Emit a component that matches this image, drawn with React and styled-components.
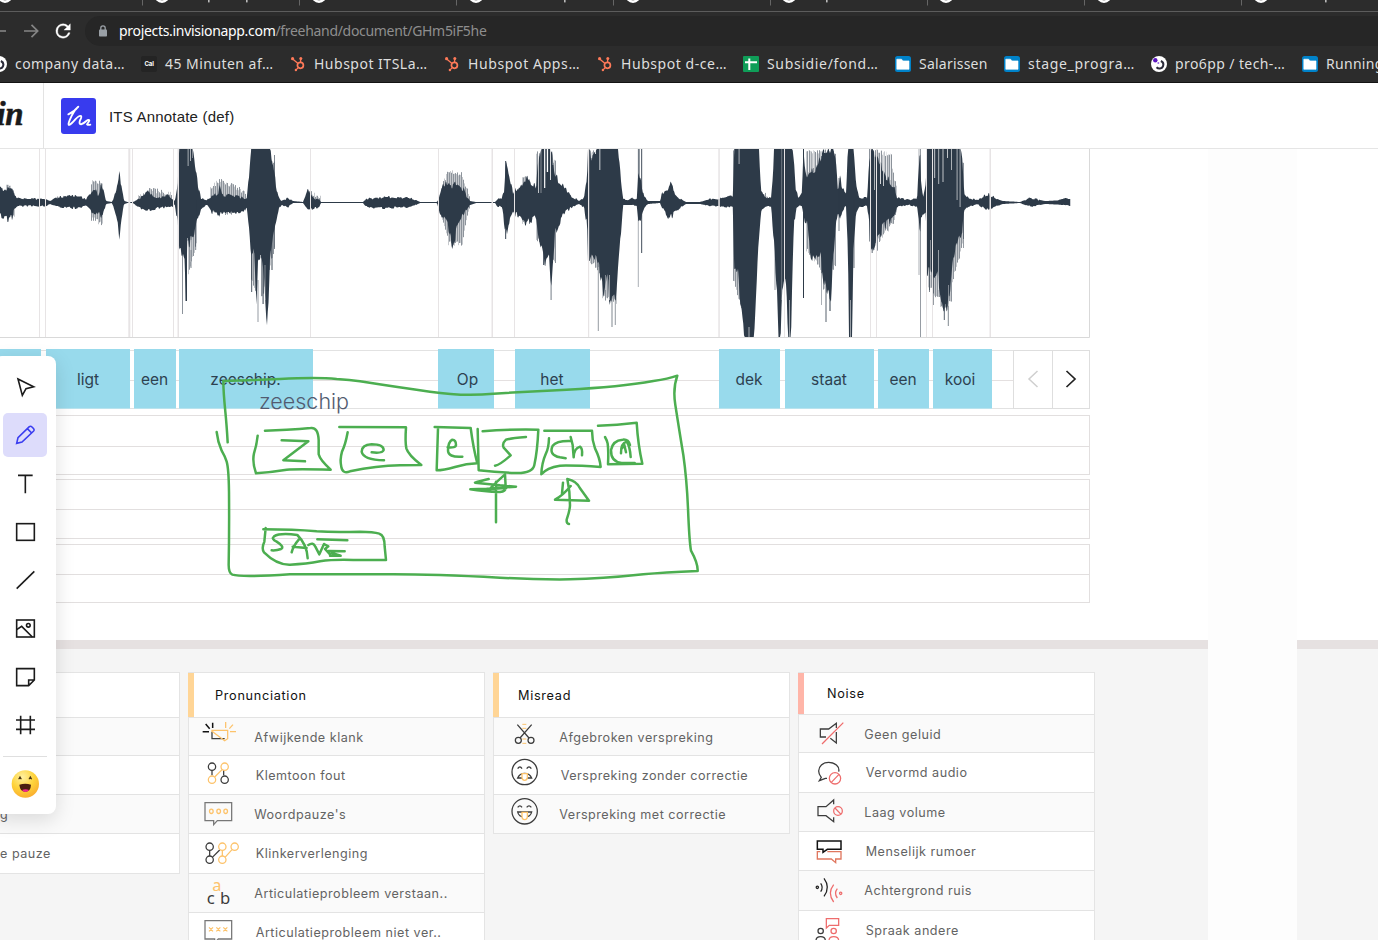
import React from "react";
import styled, { createGlobalStyle } from "styled-components";

const Global = createGlobalStyle`
  * { box-sizing: border-box; }
  body { margin: 0; overflow: hidden; background: #fff; font-family: Inter, sans-serif; }
  svg { display: block; flex: none; overflow: visible; }
`;

const Page = styled.div`
  width: 1378px;
  height: 940px;
  overflow: hidden;
  display: flex;
  flex-direction: column;
  position: relative;
`;

/* ---------- browser chrome ---------- */

const Chrome = styled.div`
  flex: none;
  height: 83px;
  background: #2c2c2c;
  border-bottom: 1px solid #141414;
  font-family: "Noto Sans", sans-serif;
`;
const TabStrip = styled.div`
  height: 12px;
  border-bottom: 1px solid #5c5c5c;
  overflow: hidden;
`;
const AddressRow = styled.div`
  height: 34px;
  padding-top: 4px;
  display: flex;
`;
const NavButtons = styled.div`
  width: 85px;
  height: 30px;
`;
const Omnibox = styled.div`
  flex: 1;
  height: 30px;
  border-radius: 15px 0 0 15px;
  background: #262626;
  display: flex;
  align-items: center;
  padding: 0 0 1px 13px;
  gap: 11px;
  font-size: 14px;
  line-height: 18px;
  letter-spacing: -0.31px;
  color: #8e8e8e;
  b { font-weight: 400; color: #fff; }
`;
const Bookmarks = styled.div`
  height: 36px;
  display: flex;
  margin-left: -9px;
`;
const Bookmark = styled.div`
  flex: none;
  width: ${(p) => p.$w}px;
  height: 36px;
  display: flex;
  align-items: center;
  gap: 8px;
  white-space: nowrap;
  font-size: 14px;
  letter-spacing: ${(p) => p.$track}px;
  color: #dedede;
  span { padding-bottom: 2px; }
`;

const TAB_X = [5, 162, 319, 476, 633, 789, 946, 1104, 1261];
const SEP_X = [142, 299, 456, 613, 770, 927, 1084, 1241];
const TAILS = [208, 246, 564, 826, 1325];

const TabMarks = () => (
  <svg width="1378" height="11" viewBox="0 0 1378 11">
    {TAB_X.map((x) => (
      <circle key={x} cx={x} cy="-5" r="6.6" fill="none" stroke="#fff" strokeWidth="2.6" />
    ))}
    {SEP_X.map((x) => (
      <rect key={x} x={x} y="0" width="1" height="5.5" fill="#666" />
    ))}
    {TAILS.map((x) => (
      <rect key={x} x={x} y="0" width="1.6" height="2.4" fill="#bbb" />
    ))}
  </svg>
);

const NavIcons = () => (
  <svg width="85" height="30" viewBox="0 16 85 30" fill="none">
    <path d="M-4 31H6" stroke="#7b7b7b" strokeWidth="1.8" />
    <path d="M24 31h13M31.5 24.8l6.2 6.2-6.2 6.2" stroke="#858585" strokeWidth="1.7" />
    <path
      transform="translate(52.3 20.2) scale(.9)"
      d="M17.65 6.35A7.95 7.95 0 0 0 12 4a8 8 0 1 0 7.73 10h-2.08A6 6 0 1 1 12 6c1.66 0 3.14.69 4.22 1.78L13 11h7V4l-2.35 2.35z"
      fill="#fff" stroke="#fff" strokeWidth=".4"
    />
  </svg>
);

const Lock = () => (
  <svg width="10" height="12" viewBox="0 0 10 12">
    <rect x="1" y="4.5" width="8" height="7" rx=".8" fill="#9aa0a6" />
    <path d="M2.8 5V3a2.2 2.2 0 0 1 4.4 0v2" fill="none" stroke="#9aa0a6" strokeWidth="1.3" />
  </svg>
);

const Swirl = () => (
  <svg width="16" height="16" viewBox="0 0 16 16">
    <circle cx="8" cy="8" r="8" fill="#fff" />
    <path d="M5.500 11.300c2 2 5.400 1.500 6.400-.8 1-2.300 0-4.500-2-5.500" fill="none" stroke="#2c2c3a" strokeWidth="2" />
    <circle cx="4.300" cy="4.300" r="2.200" fill="#5a14c0" />
    <circle cx="7.300" cy="7" r="1" fill="#9a6be0" />
  </svg>
);
const CalLogo = () => (
  <svg width="16" height="16" viewBox="0 0 16 16">
    <rect width="16" height="16" rx="2" fill="#242424" />
    <text x="8" y="10.300" textAnchor="middle" fontSize="6.200" letterSpacing="-.2" fontWeight="700" fontFamily="Inter" fill="#fff">Cal</text>
  </svg>
);
const Hub = () => (
  <svg width="16" height="16" viewBox="0 0 16 16" fill="none" stroke="#ff7a59">
    <circle cx="10.400" cy="9.300" r="3" strokeWidth="1.700" />
    <path d="M10.600 6V3M8 7.400L3 3.200M8.300 11.600L6.300 13.600" strokeWidth="1.300" />
    <g fill="#ff7a59" stroke="none">
      <circle cx="10.800" cy="2.600" r="1.500" />
      <circle cx="2.600" cy="2.700" r="1.600" />
      <circle cx="5.900" cy="14" r="1.200" />
    </g>
  </svg>
);
const Sheet = () => (
  <svg width="16" height="16" viewBox="0 0 16 16">
    <rect width="16" height="16" rx="1" fill="#0f9d58" />
    <path d="M2 6.300h12M6.300 2.500v11.500" stroke="#fff" strokeWidth="2" />
  </svg>
);
const Folder = () => (
  <svg width="16" height="16" viewBox="0 0 16 16">
    <rect width="16" height="16" rx="2.500" fill="#0082c9" />
    <path d="M1.800 3.200h4.700l1.600 1.700h5.900v8.400h-12.200z" fill="#fff" stroke="#fff" strokeWidth=".6" strokeLinejoin="round" />
  </svg>
);

const BOOKMARKS = [
  [Swirl, "company data…", 150, 0.42],
  [CalLogo, "45 Minuten af…", 149, 0.46],
  [Hub, "Hubspot ITSLa…", 154, 0.5],
  [Hub, "Hubspot Apps…", 153, 0.62],
  [Hub, "Hubspot d-ce…", 146, 0.55],
  [Sheet, "Subsidie/fond…", 152, 0.66],
  [Folder, "Salarissen", 109, 0.22],
  [Folder, "stage_progra…", 147, 0.7],
  [Swirl, "pro6pp / tech-…", 151, 0.4],
  [Folder, "Running", 100, 0.3],
];

/* ---------- document header ---------- */

const Header = styled.div`
  flex: none;
  height: 66px;
  border-bottom: 1px solid #e5e5e5;
  display: flex;
  align-items: center;
`;
const Brand = styled.div`
  width: 44px;
  height: 66px;
  border-right: 1px solid #e3e3e3;
  display: flex;
  justify-content: flex-end;
  padding: 12px 20px 0 0;
  font: italic 700 33px/38px "Liberation Serif", serif;
  -webkit-text-stroke: 0.5px #1a1a1a;
  color: #1a1a1a;
  letter-spacing: -0.5px;
`;
const DocIcon = styled.div`
  width: 35px;
  height: 36px;
  margin-left: 17px;
  border-radius: 3px;
  background: #383bee;
`;
const DocTitle = styled.div`
  margin-left: 13px;
  padding-top: 1px;
  font: 15px "Liberation Sans", sans-serif;
  letter-spacing: 0.2px;
  color: #222;
`;

/* ---------- canvas ---------- */

const Canvas = styled.div`
  flex: 1;
  display: flex;
  position: relative;
  background: #fdfdfd;
`;
const Artboard = styled.div`
  flex: none;
  width: ${(p) => p.$w}px;
  margin-right: ${(p) => p.$gap || 0}px;
  display: flex;
  flex-direction: column;
  background: #fff;
`;
const Upper = styled.div`
  height: 491px;
`;
const Divider = styled.div`
  height: 9px;
  background: #e6e1e1;
`;
const Lower = styled.div`
  flex: 1;
  background: #f5f5f5;
  padding-top: 23px;
  display: flex;
  align-items: flex-start;
  gap: 8px;
  height: 291px;
  overflow: hidden;
`;

const SegmentRow = styled.div`
  width: 1090px;
  height: 60px;
  margin-top: 11px;
  display: flex;
  background:
    linear-gradient(#e2e2e2, #e2e2e2) 0 1px / 100% 1px no-repeat,
    linear-gradient(#e4e0e0, #e4e0e0) 0 31px / 100% 1px no-repeat,
    linear-gradient(#e2e2e2, #e2e2e2) 0 59px / 100% 1px no-repeat;
`;
const Segment = styled.div`
  flex: none;
  width: ${(p) => p.$w}px;
  margin-left: ${(p) => p.$gap}px;
  height: 60px;
  line-height: 61px;
  text-align: center;
  text-indent: ${(p) => (p.$shift || 0) * 2}px;
  background: #98daec;
  border-bottom: 1px solid #b9e3ee;
  font-size: 15.5px;
  color: #2d4150;
`;
const Pager = styled.div`
  height: 59px;
  margin: 1px 0 0 21px;
  width: 77px;
  display: flex;
  background: #fff;
  border: 1px solid #dedede;
`;
const PagerCell = styled.div`
  width: ${(p) => p.$w}px;
  padding-bottom: 2px;
  display: flex;
  align-items: center;
  justify-content: center;
  & + & { border-left: 1px solid #dedede; }
`;
const Track = styled.div`
  width: 1090px;
  height: ${(p) => p.$h}px;
  margin-top: ${(p) => p.$gap}px;
  border: 1px solid #e2dfdf;
  border-left: 0;
`;
const TrackHalf = styled.div`
  height: ${(p) => p.$h}px;
  border-bottom: 1px solid #e2dfdf;
`;

/* [word, width, gap before, text shift] */
const SEGMENTS = [
  ["", 41, 0], ["ligt", 84, 5], ["een", 42, 4, -0.5], ["zeeschip.", 134, 3, -0.5], ["Op", 56, 125, 1.5],
  ["het", 75, 21, -0.5], ["dek", 61, 129, -0.5], ["staat", 89, 5, -0.5], ["een", 51, 4, -0.5], ["kooi", 59, 4, -2.5],
];

/* Envelope of the recording: [x, top, bottom]. */
const ENV = `0 190 216,5 188 218,8 187 219,12 190 217,15 197 208,18 198 206,40 199 206,45 199 206,50 201 204,57 198 207,70 195 208,80 197 208,86 199 205,92 190 212,95 189 217,98 195 211,101 184 216,103 190 215,106 201 204,112 202 203,114 197 209,118 182 222,119.5 166 239,121 184 222,124 201 204,128 202 203,133 202 203,137 200 206,145 195 210,149 190 211,152 196 210,158 198 208,168 195 207,172 199 207,175 201 205,178 180 225,179 149 249,183 149 252,184.500 149 258,186 149 300,187 149 245,193 149 238,195 165 230,198 185 218,201 198 208,207 200 205,212 197 212,218 193 213,220 185 213,222 194 212,232 196 212,240 197 212,245 199 210,247 197 208,249 178 225,251 149 250,254 149 252,256.500 149 302,258 149 262,261 149 257,263 149 262,267 149 327,268.5 149 300,270 149 258,272 160 240,275 178 225,278 195 212,281 201 205,288 198 207,293 201 203,303 202 203,307 191 208,310 193 209,315 199 208,319 199 207,321 202 203,363 202 203,366 199 207,385 197 208,400 198 207,410 198 207,416 200 205,420 202 203,437 202 203,439 197 210,443 186 218,448 185 226,453 185 247,457 184 230,463 188 216,467 197 208,470 201 205,476 202 203,495 202 203,497 200 206,502 197 207,504 192 222,506 162 236,508 170 225,510 178 220,513 192 212,515 187 214,520 190 216,526 179 225,530 183 220,536 187 217,538 165 235,541 149 245,545 149 262,549 149 252,551 149 290,553 160 258,555 175 235,560 182 220,566 190 212,573 197 206,579 201 204,584 198 207,587 180 225,588 149 262,592 158 252,597 149 262,600 149 272,604 149 296,607 149 275,610 149 302,616 149 298,618 149 270,621 180 230,623 199 205,628 200 205,632 198 205,637 199 206,638 170 225,641 180 218,644 197 208,648 201 204,660 201 203,662 194 208,667 189 215,670 183 219,675 192 212,679 198 208,686 202 204,700 202 204,710 199 206,720 199 206,722 197 207,733 197 207,734 149 272,738 149 270,740 149 300,743 149 320,744.500 149 337,754 149 337,757 149 275,759 149 235,761 188 210,764 196 208,768 198 206,771 198 207,773 175 230,774 149 245,777 149 290,778.500 149 337,780.5 149 337,782 149 290,785 149 270,787 149 305,788 149 337,791 149 337,792.500 149 275,794 160 225,796 192 210,799 197 206,802 192 206,803.5 149 215,805 168 225,807 178 225,811 172 255,815 172 262,820 160 252,823 150 278,827 151 290,831 149 300,833 149 262,836 160 225,838 195 213,840 178 222,843 190 210,846 193 206,848 149 250,849 149 337,852 149 337,853.500 149 250,856 185 212,859 198 207,867 198 206,869 165 220,871 149 250,873 152 248,877 158 238,882 168 230,887 178 222,892 186 218,895 188 212,897 198 207,903 199 206,910 200 205,917 198 207,919 168 218,920 149 232,921 180 215,923 198 216,926 185 212,927 149 272,930 149 270,933 149 282,937 149 270,940 149 290,943 149 308,947 149 310,950 149 290,953 149 260,957 149 240,959 149 230,962 155 235,964 192 212,968 198 207,977 200 204,982 197 207,987 194 209,992 196 209,997 199 206,1003 201 204,1020 202 203,1025 200 205,1029 198 206,1035 199 206,1040 200 205,1045 201 204,1057 200.5 204.5,1063 199 205,1070.500 199 205.5`
  .split(",").map((s) => s.split(" ").map(Number));

const wobble = (n) => { const v = Math.sin(n * 127.1) * 43758.5453; return v - Math.floor(v); };

function wavePath() {
  const up = [];
  const down = [];
  let k = 0;
  for (let x = 0; x <= 1070.5; x += 0.75) {
    while (k < ENV.length - 2 && ENV[k + 1][0] < x) k++;
    const [x0, a0, b0] = ENV[k];
    const [x1, a1, b1] = ENV[k + 1];
    const f = (x - x0) / (x1 - x0);
    const a = a0 + (a1 - a0) * f;
    const b = b0 + (b1 - b0) * f;
    const i = Math.floor(x / 1.5);
    const ja = 202.5 - a > 2.5 && a > 149 ? (wobble(i) - 0.5) * Math.min(7, (202.5 - a) * 0.5) : 0;
    const jb = b - 202.5 > 2.5 && b < 336 ? (wobble(i + 900) - 0.5) * Math.min(11, (b - 202.5) * 0.45) : 0;
    up.push(`${x} ${Math.max(149, a + ja).toFixed(1)}`);
    down.unshift(`${x} ${Math.min(337, b + jb).toFixed(1)}`);
  }
  return `M${up.join("L")}L${down.join("L")}Z`;
}

/* Half-tone fringes behind the envelope: [x0, x1, top at x0, top at x1, bottom at x0, bottom at x1]. */
const FRINGE = [
  [6, 15, 182, 190, 219, 217], [56, 64, 194, 195, 206, 206], [91, 103, 180, 180, 222, 226],
  [138, 150, 195, 187, 206, 206], [150, 172, 187, 192, 206, 206], [188, 197, 160, 180, 275, 245],
  [210, 220, 185, 178, 212, 217], [220, 246, 178, 190, 217, 212], [251, 257, 149, 149, 285, 295],
  [261, 275, 149, 160, 302, 248], [308, 321, 188, 196, 207, 207], [441, 448, 184, 169, 222, 238],
  [448, 462, 169, 172, 247, 246], [462, 470, 175, 195, 245, 206], [522, 530, 174, 177, 225, 225],
  [536, 556, 150, 160, 240, 268], [589, 600, 149, 149, 262, 275], [602, 617, 149, 149, 300, 306],
  [733, 743, 149, 149, 282, 318], [762, 770, 190, 196, 208, 207], [806, 822, 149, 149, 252, 275],
  [823, 836, 149, 149, 292, 265], [869, 878, 149, 149, 242, 252], [878, 892, 149, 153, 243, 228],
  [892, 897, 168, 190, 228, 210], [928, 940, 149, 149, 290, 303], [940, 952, 149, 149, 310, 305],
  [952, 964, 149, 160, 285, 240],
];
/* Single strokes: [x, width, y0, y1, opacity]. */
const SPIKES = [
  [182, 1, 250, 314, 0.55], [185.5, 1.5, 250, 301, 1], [190.5, 1, 250, 268, 0.6], [195, 1.2, 200, 250, 0.5],
  [251, 1.2, 250, 292, 0.7], [257.5, 1, 280, 322, 0.5], [262.5, 1.2, 260, 304, 0.8], [271.5, 1, 220, 270, 0.9],
  [274, 1, 155, 249, 0.6], [505, 1.2, 161, 239, 0.8], [543, 1, 250, 265, 0.8], [550.5, 1.2, 260, 300, 0.55],
  [597.8, 1, 260, 331, 0.5], [611.5, 1, 290, 327, 0.6], [614.8, 1, 290, 325, 0.5],
  [637.8, 1, 149, 287, 0.4], [638.5, 1, 149, 220, 1], [641, 1.2, 149, 253, 0.75],
  [803, 1, 149, 298, 1], [821, 1, 250, 305, 0.4], [825.5, 1, 280, 322, 0.8], [829.5, 1, 270, 311, 1],
  [871.5, 1.5, 149, 253, 0.5], [873.5, 1, 200, 250, 0.5], [920, 1, 149, 337, 0.5], [918.5, 1, 149, 275, 0.4],
  [929, 1, 250, 292, 0.6], [933, 1, 250, 305, 0.5], [943.8, 1, 290, 320, 0.8], [947.8, 1, 290, 326, 0.6],
  [963, 1, 210, 248, 0.5], [838.5, 1, 178, 231, 0.6], [774.5, 1, 240, 290, 0.5], [853.5, 1, 200, 268, 0.7],
];
/* Pale slits cut into the loudest parts. */
const SLITS = [
  [187.5, 1.3, 149, 166, 0.45], [190, 1, 149, 161, 0.6], [192, 1, 149, 158, 0.4], [187, 1, 238, 270, 0.5], [190.5, 1, 240, 262, 0.4],
  [260, 1, 255, 290, 0.6], [264.5, 1, 265, 300, 0.4],
  [538, 1, 149, 193, 0.7], [540.5, 1, 149, 193, 0.4], [544, 1.3, 149, 188, 0.9], [546.8, 1.3, 149, 172, 1], [550, 1, 149, 180, 0.8], [552.5, 1, 149, 165, 0.5],
  [591, 1, 149, 158, 0.7], [595, 1, 149, 154, 0.8], [599, 1.5, 149, 170, 0.5], [605, 1, 275, 290, 0.4], [609, 1, 275, 300, 0.5],
  [738.5, 1.2, 149, 164, 0.5], [748.5, 1, 327, 337, 0.6], [781, 1.2, 149, 300, 0.25], [789, 1, 300, 337, 0.5],
  [808, 1, 149, 172, 0.8], [810.5, 1, 149, 172, 0.5], [813, 1, 149, 168, 0.7], [816, 1, 149, 165, 0.7], [821, 1, 149, 156, 0.6], [824, 1, 149, 153, 0.7],
  [850, 1, 300, 337, 0.5], [874, 1, 149, 190, 0.6], [876, 1, 149, 185, 0.6], [880, 1, 149, 184, 0.8], [883, 1, 149, 186, 0.7], [886, 1.2, 149, 180, 0.6], [890, 1, 149, 180, 0.6],
  [934, 1.2, 149, 178, 0.6], [938, 1.2, 149, 184, 0.5], [942.5, 1, 149, 182, 0.7], [947, 1, 149, 158, 0.7], [951, 1, 149, 170, 0.6], [956.5, 1.2, 149, 200, 0.5], [959.5, 1.2, 149, 207, 0.5],
  [930, 1, 240, 275, 0.4], [938, 1, 250, 290, 0.5], [948, 1, 285, 306, 0.4],
];
const MARKERS = [[39, 1], [45, 1], [128.3, 2], [132, 1], [173, 1], [177.5, 1.5], [310, 1], [438, 1], [491.5, 1.5], [514, 1], [588, 1.2], [718.3, 1.5], [784, 1], [870, 1], [876, 1], [926, 1], [932, 1], [989.5, 1.5]];

function Waveform() {
  const stripes = [];
  FRINGE.forEach(([x0, x1, a0, a1, b0, b1], n) => {
    for (let x = x0; x < x1; x += 1) {
      const f = (x - x0) / (x1 - x0);
      const top = Math.max(149, a0 + (a1 - a0) * f + wobble(x + n) * 5);
      const bottom = b0 + (b1 - b0) * f - wobble(x + 40) * 6;
      stripes.push(
        <rect key={n + "-" + x} x={x} width="1" y={top} height={Math.max(1, bottom - top)} opacity={x % 2 ? 0.55 : 0.28} />
      );
    }
  });
  return (
    <svg width="1090" height="189" viewBox="0 149 1090 189">
      <g fill="#2d3a48">
        {stripes}
        <path d={wavePath()} />
        {SPIKES.map(([x, w, a, b, o]) => <rect key={x + "" + a} x={x} y={a} width={w} height={b - a} opacity={o} />)}
      </g>
      <g fill="#fff">
        {SLITS.map(([x, w, a, b, o]) => <rect key={x + "" + a} x={x} y={a} width={w} height={b - a} opacity={o} />)}
      </g>
      <g fill="#e7e4e5">
        {MARKERS.map(([x, w]) => <rect key={x} x={x} y="149" width={w} height="188" />)}
      </g>
      <path d="M0 337.5H1089.5V149" fill="none" stroke="#d9d9d9" />
    </svg>
  );
}

/* ---------- label tables ---------- */

const Table = styled.div`
  flex: none;
  width: ${(p) => p.$w || 297}px;
  border: 1px solid #e4e4e4;
  border-left: ${(p) => (p.$open ? "0" : "1px solid #e4e4e4")};
  background: #fff;
`;
const TableHead = styled.div`
  height: ${(p) => p.$h}px;
  padding-left: ${(p) => p.$pad}px;
  margin-left: -1px;
  border-left: 6px solid ${(p) => p.$accent};
  line-height: ${(p) => p.$h + 1}px;
  font-size: 12.7px;
  letter-spacing: 0.7px;
  color: #111;
`;
const Row = styled.div`
  height: ${(p) => p.$h}px;
  margin-left: -1px;
  border-left: 1px solid #e4e4e4;
  border-top: 1px solid #e3e3e3;
  background: ${(p) => (p.$alt ? "#fff" : "#fafafa")};
  display: flex;
`;
const Label = styled.div`
  padding-left: ${(p) => p.$pad}px;
  line-height: 40px;
  white-space: nowrap;
  font-size: 12.6px;
  letter-spacing: 0.5px;
  color: #636363;
`;

const K = "#3c3c3c";
const O = "#fdc36b";
const R = "#ee6c6c";

const Ring = ({ x, y, r = 11, c = K }) => <circle cx={x} cy={y} r={r} stroke={c} />;

const ICONS = {
  clash: (
    <>
      <path d="M96 275V296H134" stroke={K} />
      <path d="M98 248V264M77 252L89 266M68 275H87" stroke="#111" strokeWidth="4.5" />
      <path d="M94 271H143V296L134 302L94 272M137 246V264M159 254L148 266M150 275H168" stroke={O} />
    </>
  ),
  stress: (
    <>
      <path d="M96 391V406M131 391V406" stroke={K} />
      <path d="M104 411L127 388" stroke={O} />
      <Ring x={96} y={380} /><Ring x={134} y={419} /><Ring x={134} y={380} c={O} /><Ring x={96} y={419} c={O} />
    </>
  ),
  pause: (
    <>
      <path d="M75 488H155V542H112L101 554V542H75Z" stroke="#777" />
      {[94, 116, 137].map((x) => <ellipse key={x} cx={x} cy="514" rx="5.5" ry="6.5" stroke={O} />)}
    </>
  ),
  chain: (
    <>
      <path d="M89 632V648M97 652L119 630" stroke={K} />
      <path d="M127 632V648M135 652L156 629" stroke={O} />
      <Ring x={89} y={620} /><Ring x={89} y={659} /><Ring x={127} y={620} c={O} /><Ring x={127} y={659} c={O} /><Ring x={164} y={620} c={O} />
    </>
  ),
  abc: (
    <g stroke="none" fontFamily="Noto Sans">
      <text x="97" y="752" fontSize="49" fill={O}>a</text>
      <text x="80" y="791" fontSize="50" fill={K}>c</text>
      <text x="120" y="791" fontSize="50" fill={K}>b</text>
    </g>
  ),
  crosses: (
    <>
      <path d="M75 842H155V897H115L104 908V897H75Z" stroke="#777" />
      <path d="M87 862L99 874M99 862L87 874M109 862L121 874M121 862L109 874M130 862L142 874M142 862L130 874" stroke={O} />
    </>
  ),
  scissors: (
    <>
      <path d="M112 253H124M112 265H124M112 297H124M112 310H124" stroke={O} strokeWidth="3" />
      <path d="M97 254L132 294M140 254L105 294" stroke={K} />
      <Ring x={100} y={301} r={9} /><Ring x={138} y={301} r={9} />
    </>
  ),
  sad: (
    <>
      <circle cx="119" cy="396" r="38" stroke={K} />
      <path d="M98 386Q105 375 111 386M125 386Q132 375 139 386M98 414Q104 400 119 400Q134 400 140 414Z" stroke={K} />
      <path d="M111 401H127V413Q126 421 119 421Q112 421 111 413Z" stroke={O} fill="#fff" />
    </>
  ),
  glad: (
    <>
      <circle cx="119" cy="514" r="38" stroke={K} />
      <path d="M98 502Q105 493 111 502M125 502Q132 493 139 502M98 516H140Q137 531 119 531Q101 531 98 516Z" stroke={K} />
      <path d="M111 517H127V531Q126 539 119 539Q112 539 111 531Z" stroke={O} fill="#fff" />
    </>
  ),
  mute: (
    <>
      <path d="M108 291H91V267H116L139 250V264M139 276V309L121 295" stroke={K} />
      <path d="M96 312L160 248" stroke={R} />
    </>
  ),
  distort: (
    <>
      <path d="M146 395C150 379 134 367 116 367C98 367 86 379 86 393C86 403 92 409 94 412L88 422L106 415H111" stroke={K} />
      <circle cx="135" cy="415" r="17" stroke={R} /><path d="M124 427L147 403" stroke={R} />
    </>
  ),
  low: (
    <>
      <path d="M131 493V480L108 500H84V527H108L131 545V532" stroke={K} />
      <circle cx="144" cy="513" r="13" stroke={R} /><path d="M135 504L153 523" stroke={R} />
    </>
  ),
  people: (
    <>
      <path d="M82 603H153V628H112L99 637V628H82Z" stroke="#111" strokeWidth="4.5" />
      <path d="M91 635H82V657H124L137 668V657H153V635H112" stroke="#e0775f" strokeWidth="4" />
    </>
  ),
  ambient: (
    <>
      <circle cx="82" cy="742" r="3.5" stroke="#222" />
      <path d="M92 730Q101 742 92 755M102 715Q122 742 102 769" stroke="#222" />
      <circle cx="152" cy="760" r="3.5" stroke={R} />
      <path d="M142 746Q131 760 142 774M131 734Q111 760 131 786" stroke={R} />
    </>
  ),
  speech: (
    <>
      <path d="M109 864V836H146V856H118Z" stroke={R} />
      <circle cx="92" cy="873" r="8" stroke={K} /><circle cx="131" cy="873" r="8" stroke={R} />
      <path d="M78 902Q78 890 92 890Q106 890 106 902" stroke={K} />
      <path d="M117 902Q117 890 131 890Q146 890 146 902" stroke={R} />
    </>
  ),
};

const RowIcon = ({ name, top }) => (
  <svg width="60" height="38" viewBox={`27 ${(top - 640) * 3} 180 114`} fill="none" strokeWidth="3.8">
    {ICONS[name]}
  </svg>
);

/* rows: [icon, label, y, height] */
const TABLES = [
  {
    title: "Pronunciation", accent: "#ffd596", pad: 21, head: 44,
    rows: [
      ["clash", "Afwijkende klank", 718, 38], ["stress", "Klemtoon fout", 756, 39], ["pause", "Woordpauze's", 795, 39],
      ["chain", "Klinkerverlenging", 834, 40], ["abc", "Articulatieprobleem verstaan..", 874, 39], ["crosses", "Articulatieprobleem niet ver..", 913, 40],
    ],
  },
  {
    title: "Misread", accent: "#ffd596", pad: 19, head: 44,
    rows: [["scissors", "Afgebroken verspreking", 718, 38], ["sad", "Verspreking zonder correctie", 756, 39], ["glad", "Verspreking met correctie", 795, 39]],
  },
  {
    title: "Noise", accent: "#ffb5a8", pad: 23, head: 41,
    rows: [
      ["mute", "Geen geluid", 715, 38], ["distort", "Vervormd audio", 753, 40], ["low", "Laag volume", 793, 39],
      ["people", "Menselijk rumoer", 832, 39], ["ambient", "Achtergrond ruis", 871, 40], ["speech", "Spraak andere", 911, 40],
    ],
  },
];

/* ---------- floating layers ---------- */

const Sketch = styled.div`
  position: absolute;
  left: 0;
  top: 196px;
`;
const Note = styled.div`
  position: absolute;
  left: 259px;
  top: 238px;
  font-size: 21.5px;
  line-height: 28px;
  font-weight: 300;
  color: #525b70;
`;
const Toolbar = styled.div`
  position: absolute;
  left: -6px;
  top: 207px;
  width: 62px;
  height: 458px;
  padding: 9px 9px 0;
  border-radius: 8px;
  background: #fff;
  box-shadow: 0 6px 20px rgba(0, 0, 0, 0.13);
  display: flex;
  flex-direction: column;
  gap: 4.3px;
`;
const Tool = styled.div`
  height: 44px;
  border-radius: 5px;
  background: ${(p) => (p.$on ? "#dddcfb" : "transparent")};
  display: flex;
  align-items: center;
  justify-content: center;
`;
const ToolRule = styled.div`
  height: 1px;
  margin: 4.5px 0 1px;
  background: #dfdfdf;
`;

const TOOLS = [
  ["39 90 72 72", <path d="M54 102L101 125L78 131L67 151Z" />],
  ["39 234 72 72", <path d="M50 295L54 278L88 245Q92 242 96 246L101 251Q104 255 101 258L66 291ZM82 251L95 264" stroke="#3a3df0" />],
  ["39 380 72 72", <path d="M54 390H98M76 390V444" />],
  ["39 525 72 72", <rect x="50" y="536" width="53" height="50" />],
  ["39 669 72 72", <path d="M50 731L103 679" />],
  ["39 48 72 72", <><rect x="50" y="60" width="53" height="51" /><path d="M50 89L65 79L97 111" /><circle cx="85" cy="76" r="5.5" /></>],
  ["39 195 72 72", <path d="M50 206H103V240L86 257H50ZM86 257V240H103" />],
  ["39 339 72 72", <path d="M62 347V403M91 347V403M48 360H105M48 388H105" />],
];

const Emoji = () => (
  <svg width="28" height="28" viewBox="34 508 84 84">
    <defs>
      <radialGradient id="face" cx=".4" cy=".25" r=".85">
        <stop offset="0" stopColor="#fff0a0" />
        <stop offset=".5" stopColor="#fed33a" />
        <stop offset="1" stopColor="#f9a52c" />
      </radialGradient>
    </defs>
    <circle cx="77" cy="550" r="41" fill="url(#face)" />
    <path d="M57 536L61 529L65 536M88 536L92 529L96 536" fill="none" stroke="#4a3510" strokeWidth="3.5" />
    <path d="M59 552Q77 546 94 552Q93 573 77 573Q61 573 59 552Z" fill="#4a1f10" />
    <path d="M67 568Q77 563 88 568Q84 574 77 574Q71 574 67 568Z" fill="#f0288a" />
  </svg>
);

const FreehandStrokes = () => (
  <svg width="720" height="260" viewBox="0 0 2160 780" fill="none" stroke="#4cae50" strokeWidth="7.5" strokeLinecap="round" strokeLinejoin="round">
    <path d="M683 292Q680 240 676 200Q670 140 670 108Q760 106 840 102Q950 96 1010 102Q1050 105 1080 109Q1200 128 1290 140Q1390 155 1480 146L1700 134Q1860 126 1960 108Q2005 102 2032 92Q2018 130 2026 180Q2040 270 2050 330Q2060 400 2064 490Q2068 590 2073 617Q2094 655 2093 678Q1990 682 1930 688Q1800 702 1710 703Q1600 704 1500 698Q1300 688 1180 688L870 688Q790 693 750 693Q710 693 697 689Q686 684 686 660Q688 560 687 440Q686 370 680 350Q676 336 665 317Q653 290 650 261" />
    <path d="M773 272Q770 300 762 325Q756 350 768 385Q810 382 860 374Q890 372 992 374Q960 345 956 328L956 285Q954 246 932 249Q900 252 860 254L795 257" />
    <path d="M845 286L925 289L850 346L915 349" />
    <path d="M1043 262Q1036 300 1026 320Q1019 345 1024 366Q1028 388 1050 379Q1130 362 1200 361L1264 360Q1225 330 1219 310Q1215 290 1218 247L1018 246" />
    <path d="M1115 322Q1148 326 1151 315Q1150 298 1115 298Q1085 300 1085 320Q1090 344 1152 346" />
    <path d="M1304 246L1412 249Q1420 310 1432 355Q1400 356 1365 366Q1330 376 1310 376L1314 250" />
    <path d="M1343 307Q1368 309 1368 300Q1368 284 1357 284Q1345 290 1344 315Q1343 338 1387 335" />
    <path d="M1433 252L1436 376Q1490 382 1545 384Q1598 386 1603 360Q1612 320 1615 254Q1530 252 1448 259" />
    <path d="M1578 276Q1530 280 1518 284Q1505 296 1511 308L1532 331Q1500 360 1485 362" />
    <path d="M1647 280Q1646 310 1638 325Q1625 355 1624 388Q1640 368 1680 362Q1730 361 1802 366Q1800 340 1785 310Q1776 285 1776 257L1633 257" />
    <path d="M1715 288Q1670 286 1658 302Q1645 330 1680 337L1697 340M1712 276L1718 300L1721 337Q1722 310 1740 305Q1748 310 1746 331" />
    <path d="M1794 242Q1850 240 1910 233Q1914 300 1927 356L1824 358Q1826 320 1823 296Q1822 288 1815 276" />
    <path d="M1890 300Q1885 282 1868 284Q1838 286 1833 315Q1832 350 1865 354L1904 354M1863 325Q1862 295 1880 290Q1890 305 1892 336M1866 310L1873 300L1878 322" />
    <path d="M1488 532V410M1466 402Q1440 408 1425 413L1500 421L1548 425L1460 431L1411 433Q1450 440 1500 441Q1518 440 1517 425L1515 388Q1490 410 1468 433L1520 428" />
    <path d="M1707 537Q1699 536 1700 524Q1710 495 1710 480L1708 440L1702 402Q1730 408 1740 430L1767 467L1665 464Q1690 450 1712 423M1689 413L1686 445" />
    <path d="M797 549L793 590Q784 610 792 622Q830 660 870 659Q920 657 960 649Q1000 643 1060 645L1158 645L1154 605Q1154 570 1138 566Q1120 560 1080 560Q1000 562 950 559Q880 553 790 553" />
    <path d="M892 570Q840 563 822 574Q813 582 830 590Q855 606 843 612Q830 617 815 616M875 622Q880 602 897 583M892 570Q922 600 923 640M878 605L920 609M925 600Q940 590 946 605L958 628L972 597M952 583L1042 586M972 597L985 604L975 612L990 628M985 618L1034 619M990 632L1022 632L995 624" />
  </svg>
);

export default function App() {
  return (
    <Page>
      <Global />
      <Chrome>
        <TabStrip><TabMarks /></TabStrip>
        <AddressRow>
          <NavButtons><NavIcons /></NavButtons>
          <Omnibox>
            <Lock />
            <span><b>projects.invisionapp.com</b>/freehand/document/GHm5iF5he</span>
          </Omnibox>
        </AddressRow>
        <Bookmarks>
          {BOOKMARKS.map(([Icon, text, w, track]) => (
            <Bookmark key={text} $w={w} $track={track}><Icon /><span>{text}</span></Bookmark>
          ))}
        </Bookmarks>
      </Chrome>

      <Header>
        <Brand>in</Brand>
        <DocIcon>
          <svg width="35" height="36" viewBox="183 294 105 108" fill="none" stroke="#fff" strokeLinecap="round" strokeLinejoin="round">
            <path d="M205 343Q222 336 235 320Q222 330 210 358Q203 374 207 375Q214 372 226 358Q238 345 243 348Q246 351 240 361Q236 372 243 373Q252 370 259 363Q267 357 268 362Q264 370 261 373Q264 376 271 374" strokeWidth="5.5" />
          </svg>
        </DocIcon>
        <DocTitle>ITS Annotate (def)</DocTitle>
      </Header>

      <Canvas>
        <Artboard $w={1208} $gap={89}>
          <Upper>
            <Waveform />
            <SegmentRow>
              {SEGMENTS.map(([text, w, gap, shift], i) => <Segment key={i} $w={w} $gap={gap} $shift={shift}>{text}</Segment>)}
              <Pager>
                <PagerCell $w={38}>
                  <svg width="12" height="18" viewBox="0 0 12 18"><path d="M10.500 1L2 9l8.500 8" fill="none" stroke="#cfcfcf" strokeWidth="1.500" /></svg>
                </PagerCell>
                <PagerCell $w={37}>
                  <svg width="12" height="18" viewBox="0 0 12 18"><path d="M1.500 1L10 9l-8.500 8" fill="none" stroke="#222" strokeWidth="1.700" /></svg>
                </PagerCell>
              </Pager>
            </SegmentRow>
            <Track $h={60} $gap={6}><TrackHalf $h={31} /></Track>
            <Track $h={60} $gap={4}><TrackHalf $h={30} /></Track>
            <Track $h={59} $gap={5}><TrackHalf $h={30} /></Track>
          </Upper>
          <Divider />
          <Lower>
            <Table $w={180} $open>
              <TableHead $h={44} $pad={0} $accent="transparent" />
              <Row $h={38} />
              <Row $h={39} $alt />
              <Row $h={39}><Label $pad={0}>g</Label></Row>
              <Row $h={40} $alt><Label $pad={0}>e pauze</Label></Row>
            </Table>
            {TABLES.map((t) => (
              <Table key={t.title}>
                <TableHead $h={t.head} $pad={t.pad} $accent={t.accent}>{t.title}</TableHead>
                {t.rows.map(([icon, text, y, h], i) => (
                  <Row key={text} $h={h} $alt={i % 2 === 1}>
                    <RowIcon name={icon} top={y} />
                    <Label $pad={i % 2 ? 6.7 : 5.3}>{text}</Label>
                  </Row>
                ))}
              </Table>
            ))}
          </Lower>
        </Artboard>
        <Artboard $w={81}>
          <Upper />
          <Divider />
          <Lower />
        </Artboard>
        <Note>zeeschip</Note>
        <Sketch><FreehandStrokes /></Sketch>
        <Toolbar>
          {TOOLS.map(([box, shape], i) => (
            <Tool key={box} $on={i === 1}>
              <svg width="24" height="24" viewBox={box} fill="none" stroke="#1b1b1b" strokeWidth="4.8">{shape}</svg>
            </Tool>
          ))}
          <ToolRule />
          <Tool><Emoji /></Tool>
        </Toolbar>
      </Canvas>
    </Page>
  );
}
